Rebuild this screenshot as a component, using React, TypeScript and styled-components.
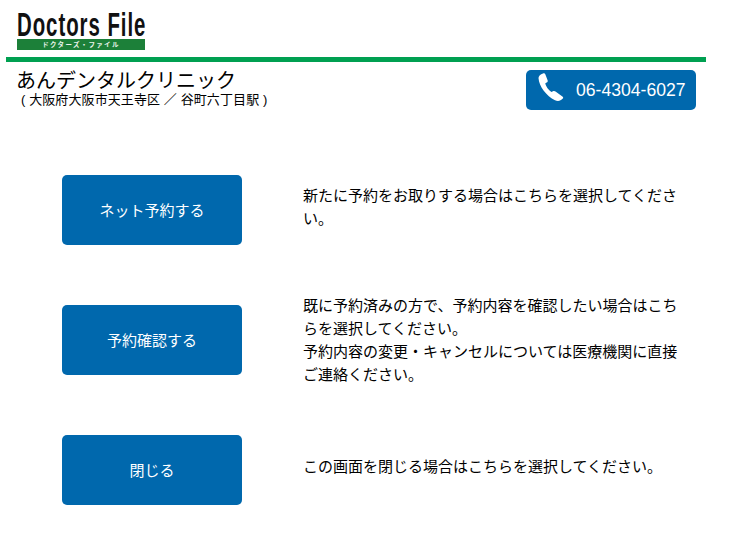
import React from "react";
import styled, { createGlobalStyle } from "styled-components";

const GlobalStyle = createGlobalStyle`
  html, body {
    margin: 0;
    padding: 0;
    background: #fff;
    color: #000;
    font-family: "Liberation Sans", "Noto Sans CJK JP", sans-serif;
  }
`;

const Page = styled.div`
  width: 700px;
  margin-left: 6px;
`;

const Logo = styled.div`
  height: 57px;
  padding: 9px 0 0 11px;
  box-sizing: border-box;
`;

const LogoWord = styled.div`
  height: 30px;
  font-family: "Liberation Sans", sans-serif;
  font-weight: 700;
  font-size: 34px;
  line-height: 30px;
  letter-spacing: 1.6px;
  color: #111;
  white-space: nowrap;
  transform: scaleX(0.6);
  transform-origin: left center;
`;

const LogoBand = styled.div`
  width: 128px;
  height: 11px;
  background: #1c8039;
  color: #e8f3ea;
  font-family: "Noto Sans CJK JP", sans-serif;
  font-size: 6.5px;
  font-weight: 700;
  line-height: 11px;
  letter-spacing: 1.3px;
  text-align: center;
`;

const Header = styled.header`
  border-top: 5px solid #00a051;
  display: flex;
  justify-content: space-between;
  padding: 8px 10px 0 10px;
`;

const Clinic = styled.div``;

const ClinicName = styled.h1`
  margin: 0;
  font-size: 20px;
  font-weight: 400;
  line-height: 22px;
`;

const ClinicPlace = styled.p`
  margin: 0 0 0 5px;
  font-size: 13px;
  letter-spacing: 0.1px;
  line-height: 15px;
`;

const PhoneButton = styled.a`
  width: 170px;
  height: 40px;
  display: flex;
  align-items: center;
  gap: 12px;
  padding-left: 12px;
  box-sizing: border-box;
  background: #0068ad;
  border-radius: 5px;
  color: #fff;
  font-size: 17.6px;

  svg {
    margin-bottom: 5px;
  }
`;

const Actions = styled.main`
  display: flex;
  flex-direction: column;
  gap: 60px;
  padding: 65px 0 0 56px;
`;

const Row = styled.section`
  display: flex;
  align-items: center;
  height: 70px;
  gap: 61px;
`;

const ActionButton = styled.button`
  flex: none;
  width: 180px;
  height: 70px;
  padding: 0 0 2px;
  border: 0;
  border-radius: 5px;
  background: #0068ad;
  color: #fff;
  font-family: inherit;
  font-size: 15px;
`;

const Description = styled.p<{ $lift: number }>`
  margin: 0 0 ${(p) => p.$lift}px;
  width: 378px;
  font-size: 15px;
  line-height: 23px;
`;

const PhoneIcon = () => (
  <svg width="26" height="29" viewBox="0 0 26 29" fill="#fff">
    <path d="M0.5 5 C0.5 3 2.5 1.2 5 0.4 C6.2 0 7 0.4 7.4 1.4 L9.6 7.2 C10 8.3 9.6 9 8.6 9.6 L7.2 10.5 C8 13.5 10.5 17 13.4 19 L15 18.2 C16 17.7 16.8 17.9 17.5 18.5 L24.4 23.4 C25.3 24 25.4 24.9 24.8 25.6 C22.6 28 19.8 28.6 17 27.2 C8.5 23 1 13.5 0.5 5 Z" />
  </svg>
);

const rows = [
  { label: "ネット予約する", lift: 6, lines: ["新たに予約をお取りする場合はこちらを選択してください。"] },
  {
    label: "予約確認する",
    lift: 0,
    lines: [
      "既に予約済みの方で、予約内容を確認したい場合はこちらを選択してください。",
      "予約内容の変更・キャンセルについては医療機関に直接ご連絡ください。",
    ],
  },
  { label: "閉じる", lift: 8, lines: ["この画面を閉じる場合はこちらを選択してください。"] },
];

export default function App() {
  return (
    <Page>
      <GlobalStyle />
      <Logo>
        <LogoWord>Doctors File</LogoWord>
        <LogoBand>ドクターズ・ファイル</LogoBand>
      </Logo>
      <Header>
        <Clinic>
          <ClinicName>あんデンタルクリニック</ClinicName>
          <ClinicPlace>( 大阪府大阪市天王寺区 ／ 谷町六丁目駅 )</ClinicPlace>
        </Clinic>
        <PhoneButton>
          <PhoneIcon />
          06-4304-6027
        </PhoneButton>
      </Header>
      <Actions>
        {rows.map((row) => (
          <Row key={row.label}>
            <ActionButton>{row.label}</ActionButton>
            <Description $lift={row.lift}>
              {row.lines.map((line) => (
                <React.Fragment key={line}>
                  {line}
                  <br />
                </React.Fragment>
              ))}
            </Description>
          </Row>
        ))}
      </Actions>
    </Page>
  );
}
